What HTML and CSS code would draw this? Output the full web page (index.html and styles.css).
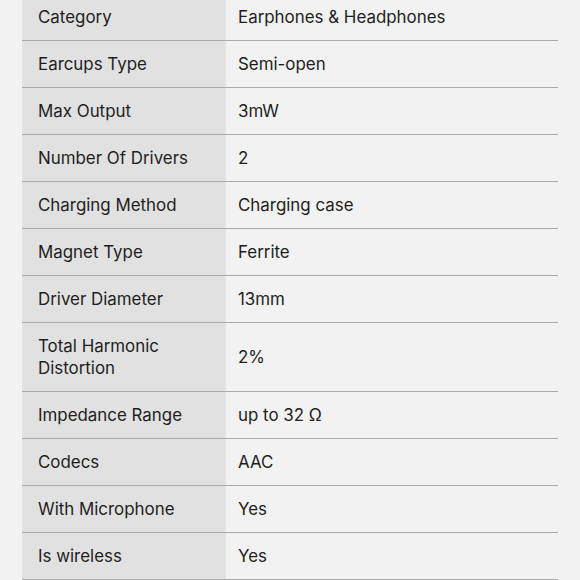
FILE: index.html
```html
<!DOCTYPE html>
<html>
<head>
<meta charset="utf-8">
<link rel="stylesheet" href="styles.css">
</head>
<body>
<table class="specs">
<tr><td class="key">Category</td><td class="val">Earphones &amp; Headphones</td></tr>
<tr><td class="key">Earcups Type</td><td class="val">Semi-open</td></tr>
<tr><td class="key">Max Output</td><td class="val">3mW</td></tr>
<tr><td class="key">Number Of Drivers</td><td class="val">2</td></tr>
<tr><td class="key">Charging Method</td><td class="val">Charging case</td></tr>
<tr><td class="key">Magnet Type</td><td class="val">Ferrite</td></tr>
<tr><td class="key">Driver Diameter</td><td class="val">13mm</td></tr>
<tr><td class="key">Total Harmonic<br>Distortion</td><td class="val">2%</td></tr>
<tr><td class="key">Impedance Range</td><td class="val">up to 32 Ω</td></tr>
<tr><td class="key">Codecs</td><td class="val">AAC</td></tr>
<tr><td class="key">With Microphone</td><td class="val">Yes</td></tr>
<tr><td class="key">Is wireless</td><td class="val">Yes</td></tr>
</table>
</body>
</html>
```
FILE: styles.css
```css
html, body {
  margin: 0;
  padding: 0;
  background: #f2f2f2;
}
body {
  font-family: "Inter", "Noto Sans", sans-serif;
  font-size: 16.9px;
  color: #1e1e1e;
  overflow: hidden;
}
.specs {
  margin: -6px 0 0 22px;
  width: 536px;
  border-collapse: collapse;
  table-layout: fixed;
}
.specs td {
  padding: 12px 12px;
  line-height: 22px;
  border-bottom: 1px solid #ababab;
  vertical-align: middle;
}
.specs td.key {
  width: 204px;
  box-sizing: border-box;
  padding-left: 16px;
  background: #e1e1e1;
}
.val {
  background: #f2f2f2;
}
```
